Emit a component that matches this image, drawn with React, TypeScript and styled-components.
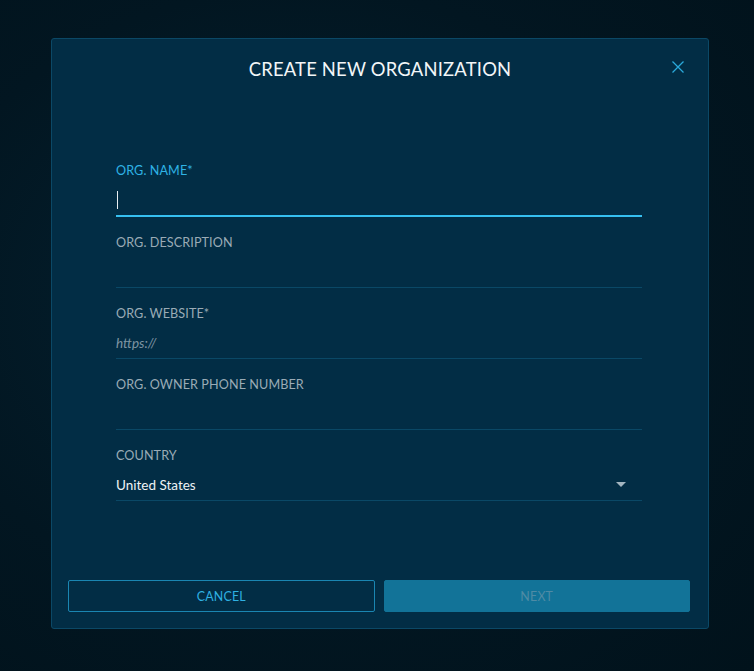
import styled, { createGlobalStyle } from 'styled-components'

const GlobalStyle = createGlobalStyle`
  html, body {
    margin: 0;
    padding: 0;
    background: #02151f;
    height: 100%;
  }
  body {
    font-family: Lato, "Open Sans", sans-serif;
    background: radial-gradient(ellipse at 40% 45%, #042232 0%, #021621 60%, #01121b 100%);
    min-height: 671px;
  }
`

const Page = styled.div`
  padding: 38px 0 0 51px;
  height: 671px;
  box-sizing: border-box;
`

const Modal = styled.div`
  width: 658px;
  height: 591px;
  box-sizing: border-box;
  background: #022d45;
  border: 1px solid #0b4866;
  border-radius: 3px;
  display: flex;
  flex-direction: column;
`

const Header = styled.div`
  position: relative;
  height: 60px;
  display: flex;
  align-items: center;
  justify-content: center;
`

const Title = styled.h1`
  margin: 0;
  font-size: 18.4px;
  font-weight: 400;
  color: #f2f6f8;
  letter-spacing: 0.2px;
`

const CloseButton = styled.button`
  position: absolute;
  right: 22px;
  top: 20px;
  width: 16px;
  height: 16px;
  padding: 0;
  border: 0;
  background: none;
  display: flex;
  align-items: center;
  justify-content: center;
  cursor: pointer;
`

const Form = styled.form`
  padding: 65px 66px 0 64px;
  flex: 1;
`

const Field = styled.div<{ $focused?: boolean }>`
  padding-top: ${p => (p.$focused ? 0 : 19)}px;
  border-bottom: ${p => (p.$focused ? '2px solid #36bff0' : '1px solid #0a4866')};
`

const Label = styled.label<{ $active?: boolean }>`
  display: block;
  font-size: 12.6px;
  line-height: 14px;
  letter-spacing: 0.1px;
  color: ${p => (p.$active ? '#2fb3e6' : '#9aabb6')};
`

const InputRow = styled.div`
  height: 31px;
  margin-top: 6px;
  display: flex;
  align-items: center;
`

const Caret = styled.span`
  width: 1px;
  height: 18px;
  margin-left: 1px;
  background: #e8eef2;
`

const TextInput = styled.input`
  flex: 1;
  height: 100%;
  padding: 0;
  border: 0;
  outline: none;
  background: transparent;
  font-family: Lato, "Open Sans", sans-serif;
  font-size: 13.5px;
  color: #e6eef2;
  &::placeholder {
    color: #7f95a3;
    font-style: italic;
  }
`

const SelectValue = styled.div`
  flex: 1;
  font-size: 13.5px;
  color: #eef3f6;
`

const Triangle = styled.span`
  width: 0;
  height: 0;
  margin-right: 16px;
  border-left: 5px solid transparent;
  border-right: 5px solid transparent;
  border-top: 5px solid #a3b5c0;
`

const Footer = styled.div`
  display: grid;
  grid-template-columns: 1fr 1fr;
  gap: 9px;
  padding: 0 18px 16px 16px;
`

const Button = styled.button<{ $primary?: boolean }>`
  height: 32px;
  border-radius: 2px;
  font-family: Lato, "Open Sans", sans-serif;
  font-size: 12.4px;
  letter-spacing: 0.2px;
  cursor: pointer;
  border: 1px solid ${p => (p.$primary ? '#127398' : '#1a86b2')};
  background: ${p => (p.$primary ? '#127398' : 'transparent')};
  color: ${p => (p.$primary ? '#4f8ba5' : '#2fb1e2')};
`

export default function App() {
  return (
    <>
      <GlobalStyle />
      <Page>
        <Modal>
          <Header>
            <Title>CREATE NEW ORGANIZATION</Title>
            <CloseButton aria-label="Close">
              <svg width="12" height="12" viewBox="0 0 12 12">
                <path d="M0.5 0.5 L11.5 11.5 M11.5 0.5 L0.5 11.5" stroke="#2aa9da" strokeWidth="1.3" fill="none" />
              </svg>
            </CloseButton>
          </Header>
          <Form>
            <Field $focused>
              <Label $active>ORG. NAME*</Label>
              <InputRow>
                <Caret />
              </InputRow>
            </Field>
            <Field>
              <Label>ORG. DESCRIPTION</Label>
              <InputRow>
                <TextInput />
              </InputRow>
            </Field>
            <Field>
              <Label>ORG. WEBSITE*</Label>
              <InputRow>
                <TextInput placeholder="https://" />
              </InputRow>
            </Field>
            <Field>
              <Label>ORG. OWNER PHONE NUMBER</Label>
              <InputRow>
                <TextInput />
              </InputRow>
            </Field>
            <Field>
              <Label>COUNTRY</Label>
              <InputRow>
                <SelectValue>United States</SelectValue>
                <Triangle />
              </InputRow>
            </Field>
          </Form>
          <Footer>
            <Button type="button">CANCEL</Button>
            <Button type="button" $primary>NEXT</Button>
          </Footer>
        </Modal>
      </Page>
    </>
  )
}
